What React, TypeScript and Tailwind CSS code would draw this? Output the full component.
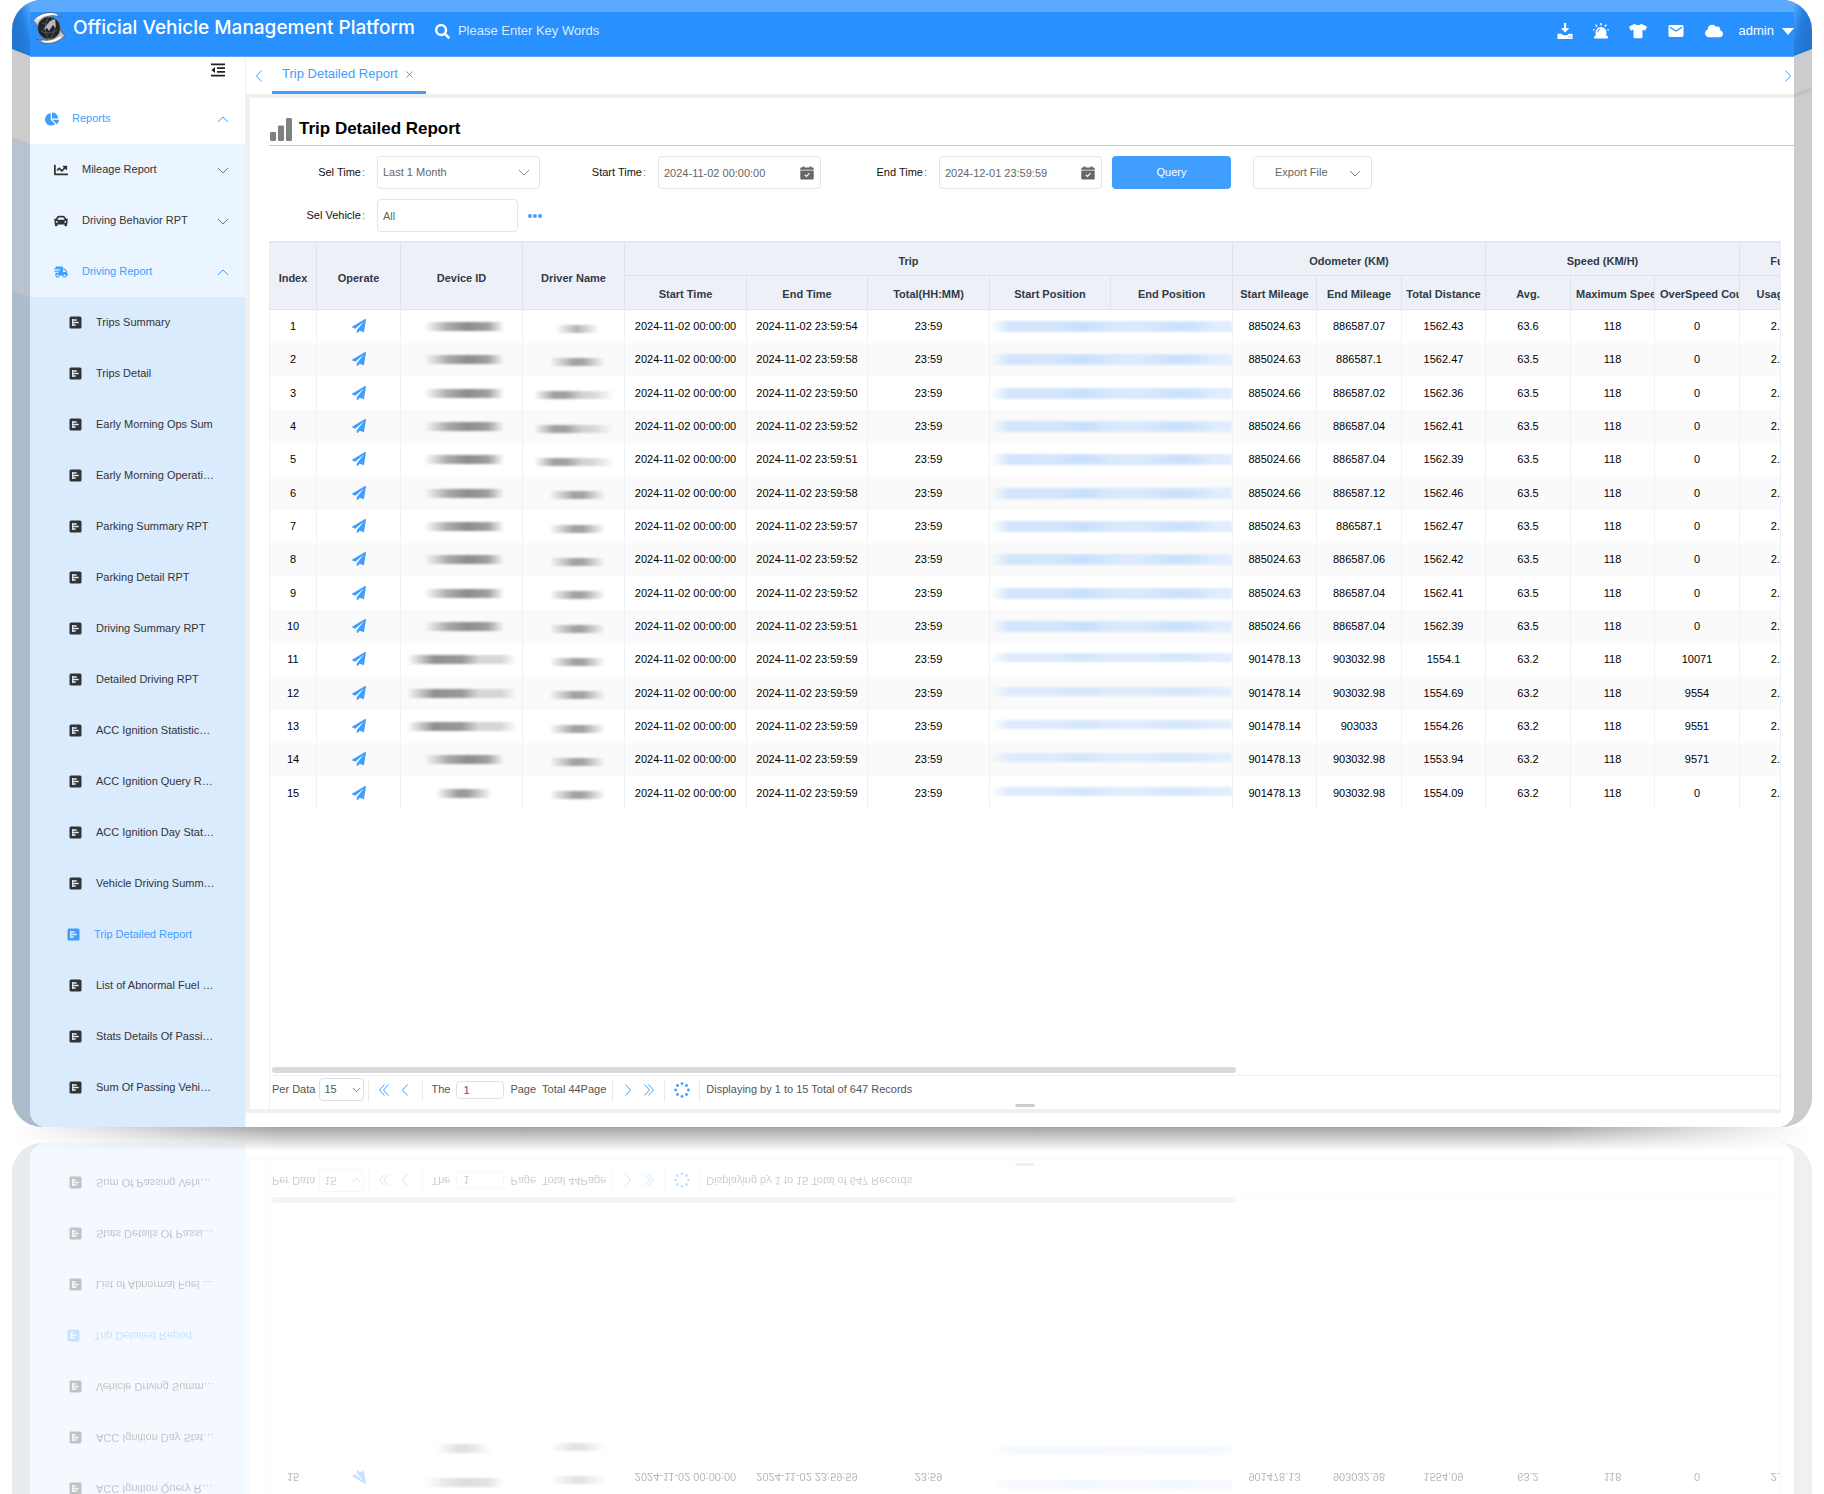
import type { ReactNode } from 'react';
import { clsx } from 'clsx';
import {
  FaCar,
  FaChartLine,
  FaChartPie,
  FaCloud,
  FaPaperPlane,
  FaSearch,
  FaShippingFast,
  FaTshirt,
} from 'react-icons/fa';
import { MdEmail } from 'react-icons/md';

interface TripRow {
  endTime: string;
  startMileage: string;
  endMileage: string;
  distance: string;
  avg: string;
  overSpeed: string;
  device: 'mid' | 'wide' | 'small';
  driver: 'mid' | 'wide' | 'small';
}

const trips: TripRow[] = [
  { endTime: '23:59:54', startMileage: '885024.63', endMileage: '886587.07', distance: '1562.43', avg: '63.6', overSpeed: '0', device: 'mid', driver: 'small' },
  { endTime: '23:59:58', startMileage: '885024.63', endMileage: '886587.1', distance: '1562.47', avg: '63.5', overSpeed: '0', device: 'mid', driver: 'mid' },
  { endTime: '23:59:50', startMileage: '885024.66', endMileage: '886587.02', distance: '1562.36', avg: '63.5', overSpeed: '0', device: 'mid', driver: 'wide' },
  { endTime: '23:59:52', startMileage: '885024.66', endMileage: '886587.04', distance: '1562.41', avg: '63.5', overSpeed: '0', device: 'mid', driver: 'wide' },
  { endTime: '23:59:51', startMileage: '885024.66', endMileage: '886587.04', distance: '1562.39', avg: '63.5', overSpeed: '0', device: 'mid', driver: 'wide' },
  { endTime: '23:59:58', startMileage: '885024.66', endMileage: '886587.12', distance: '1562.46', avg: '63.5', overSpeed: '0', device: 'mid', driver: 'mid' },
  { endTime: '23:59:57', startMileage: '885024.63', endMileage: '886587.1', distance: '1562.47', avg: '63.5', overSpeed: '0', device: 'mid', driver: 'mid' },
  { endTime: '23:59:52', startMileage: '885024.63', endMileage: '886587.06', distance: '1562.42', avg: '63.5', overSpeed: '0', device: 'mid', driver: 'mid' },
  { endTime: '23:59:52', startMileage: '885024.63', endMileage: '886587.04', distance: '1562.41', avg: '63.5', overSpeed: '0', device: 'mid', driver: 'mid' },
  { endTime: '23:59:51', startMileage: '885024.66', endMileage: '886587.04', distance: '1562.39', avg: '63.5', overSpeed: '0', device: 'mid', driver: 'mid' },
  { endTime: '23:59:59', startMileage: '901478.13', endMileage: '903032.98', distance: '1554.1', avg: '63.2', overSpeed: '10071', device: 'wide', driver: 'mid' },
  { endTime: '23:59:59', startMileage: '901478.14', endMileage: '903032.98', distance: '1554.69', avg: '63.2', overSpeed: '9554', device: 'wide', driver: 'mid' },
  { endTime: '23:59:59', startMileage: '901478.14', endMileage: '903033', distance: '1554.26', avg: '63.2', overSpeed: '9551', device: 'wide', driver: 'mid' },
  { endTime: '23:59:59', startMileage: '901478.13', endMileage: '903032.98', distance: '1553.94', avg: '63.2', overSpeed: '9571', device: 'mid', driver: 'mid' },
  { endTime: '23:59:59', startMileage: '901478.13', endMileage: '903032.98', distance: '1554.09', avg: '63.2', overSpeed: '0', device: 'small', driver: 'mid' },
];

const reportLinks = [
  'Trips Summary',
  'Trips Detail',
  'Early Morning Ops Sum',
  'Early Morning Operati…',
  'Parking Summary RPT',
  'Parking Detail RPT',
  'Driving Summary RPT',
  'Detailed Driving RPT',
  'ACC Ignition Statistic…',
  'ACC Ignition Query R…',
  'ACC Ignition Day Stat…',
  'Vehicle Driving Summ…',
  'Trip Detailed Report',
  'List of Abnormal Fuel …',
  'Stats Details Of Passi…',
  'Sum Of Passing Vehi…',
];

const ACTIVE_REPORT = 'Trip Detailed Report';

/* ---------- icons ---------- */

const chevronPoints = {
  up: '1,9 6,4 11,9',
  down: '1,4 6,9 11,4',
  left: '8.5,0.5 3.5,6 8.5,11.5',
  right: '3.5,0.5 8.5,6 3.5,11.5',
};

function Chevron({ dir, className = 'size-3' }: { dir: keyof typeof chevronPoints; className?: string }) {
  return (
    <svg viewBox="0 0 12 12" className={className} fill="none" stroke="currentColor" strokeWidth="1">
      <polyline points={chevronPoints[dir]} />
    </svg>
  );
}

function DoubleChevron({ dir }: { dir: 'left' | 'right' }) {
  return (
    <svg viewBox="0 0 12 12" className="size-3" fill="none" stroke="currentColor" strokeWidth="1">
      {dir === 'left' ? (
        <>
          <polyline points="6.5,0.5 1.5,6 6.5,11.5" />
          <polyline points="10.5,0.5 5.5,6 10.5,11.5" />
        </>
      ) : (
        <>
          <polyline points="1.5,0.5 6.5,6 1.5,11.5" />
          <polyline points="5.5,0.5 10.5,6 5.5,11.5" />
        </>
      )}
    </svg>
  );
}

function DownloadIcon() {
  return (
    <svg viewBox="0 0 16 16" className="size-4" fill="currentColor">
      <path d="M7 0h2.2v5.2h3.2L8.1 9.6 3.8 5.2H7z" />
      <path d="M.5 10.8h4l1.6 1.4h4l1.6-1.4h3.8V16H.5zm10.7 2.6v1h1v-1zm2 0v1h1v-1z" fillRule="evenodd" />
    </svg>
  );
}

function AlarmIcon() {
  return (
    <svg viewBox="0 0 16 16" className="size-4" fill="currentColor">
      <path d="M2.6 13V9.4a5.4 5.4 0 0 1 10.8 0V13h1.4v2.6H1.2V13z" />
      <path d="M7.3 0h1.4v2.4H7.3zM2 2.2l1-1 1.7 1.8-1 1zM13 1.2l1 1L12.3 4l-1-1zM0 6.2h1.7v1.3H0zM14.3 6.2H16v1.3h-1.7z" />
      <path d="M4.6 9.2a3.5 3.5 0 0 1 2.7-3.2" fill="none" stroke="#2890ff" strokeWidth="1" />
    </svg>
  );
}

function FoldIcon() {
  return (
    <svg viewBox="0 0 14 14" className="size-[14px]" fill="currentColor">
      <path d="M0 .5h14v1.8H0zM6 4.3h8V6H6zM6 8h8v1.7H6zM0 11.8h14v1.8H0zM.4 7 4 4v6z" />
    </svg>
  );
}

function ReportIcon() {
  return (
    <svg viewBox="0 0 13 13" className="size-[13px] shrink-0">
      <rect x=".5" y=".5" width="12" height="12" rx="1.5" fill="currentColor" />
      <path d="M3.7 3v7M3.7 4h4M3.7 6.5h6M3.7 9h3" stroke="#dbebfe" strokeWidth="1.3" fill="none" />
    </svg>
  );
}

function CalendarIcon() {
  return (
    <svg viewBox="0 0 14 14" className="pointer-events-none absolute top-[10px] right-[7px] size-[14px] text-[#666]">
      <path d="M1 1.5h1.5v-1h2v1h5v-1h2v1H13a.7.7 0 0 1 .7.7v1.5H.3V2.2a.7.7 0 0 1 .7-.7z" fill="currentColor" />
      <path d="M.3 4.4h13.4v8.200a1 1 0 0 1-1 1H1.300a1 1 0 0 1-1-1z" fill="currentColor" />
      <path d="m4.800 8.800 1.700 1.700 3-3.300" stroke="#fff" strokeWidth="1.2" fill="none" />
    </svg>
  );
}

function BarsIcon() {
  return (
    <svg viewBox="0 0 24 24" className="size-6 text-[#808080]" fill="currentColor">
      <rect x="1" y="15" width="6" height="9" rx="1.2" />
      <rect x="9" y="8.5" width="6" height="15.5" rx="1.2" />
      <rect x="17" y="1" width="6" height="23" rx="1.2" />
    </svg>
  );
}

function LoadingIcon() {
  const dots = [
    [8, 1.6], [12.5, 3.5], [14.4, 8], [12.5, 12.5],
    [8, 14.4], [3.5, 12.5], [1.6, 8], [3.5, 3.5],
  ];
  return (
    <svg viewBox="0 0 16 16" className="size-4" fill="currentColor">
      {dots.map(([x, y]) => (
        <circle key={`${x}-${y}`} cx={x} cy={y} r="1.4" />
      ))}
    </svg>
  );
}

function Logo() {
  return (
    <svg viewBox="0 0 34 34" className="size-[34px] shrink-0">
      <path d="M1 10C6 2 20-2 30 6c-6-2-12-2-17 1C8 9 6 13 6 18 5 14 4 11 1 10z" fill="#d9d9d9" stroke="#555" strokeWidth=".6" />
      <path d="M33 24c-5 8-19 12-29 4 6 2 12 2 17-1 5-2 7-6 7-11 1 4 2 7 5 8z" fill="#c4c4c4" stroke="#444" strokeWidth=".6" />
      <path d="M5 8c6-5 14-6 20-4M10 30c6 2 13 0 19-4" stroke="#fff" strokeWidth="1.6" fill="none" />
      <circle cx="17" cy="17" r="11.5" fill="#222427" stroke="#7d7d7d" strokeWidth="1" />
      <path d="M9 20c3 2 11 3 16-1M10 12c4 2 9 2 14-1M17 6c-5 6-5 16 0 22M19 6c5 6 5 15-1 22" stroke="#5b5f64" strokeWidth=".9" fill="none" />
      <path d="m11 19 7-9 5-2 1 9-3-3-4 6-2-3z" fill="#b4b7bb" />
    </svg>
  );
}

/* ---------- device frame ---------- */

function FrameEdge({ side }: { side: 'left' | 'right' }) {
  return (
    <svg className={clsx('w-[18px] shrink-0 self-stretch', side === 'right' && '-scale-x-100')}>
      <defs>
        <linearGradient id={`frame-corner-${side}`} x1="1" y1="0" x2="0.3" y2="0.6">
          <stop offset="0" stopColor="#5aabff" />
          <stop offset="0.6" stopColor="#2480e0" />
          <stop offset="1" stopColor="#2276d2" />
        </linearGradient>
      </defs>
      {side === 'left' ? (
        <>
          <rect width="18" height="100%" fill="#acbccd" />
          <polygon points="0,0 18,0 18,297 0,291" fill="#b9c3cf" />
          <polygon points="0,0 18,0 18,144 0,137" fill="#cdcccd" />
        </>
      ) : (
        <>
          <rect width="18" height="100%" fill="#cbccce" />
          <polygon points="0,87 18,94 18,98 0,91" fill="#c2c2c4" />
        </>
      )}
      <polygon points="0,0 18,0 18,56 0,49" fill={`url(#frame-corner-${side})`} />
    </svg>
  );
}

/* ---------- header ---------- */

function Header() {
  return (
    <header className="flex h-[57px] items-center border-t-[12px] border-b border-t-[#5aabff] border-b-[#5aabff] bg-[#2890ff] pl-0.5 text-white">
      <div className="flex items-center gap-[7px] pb-3">
        <Logo />
        <h1 className="font-['Inter',sans-serif] text-[19px] font-medium whitespace-nowrap">
          Official Vehicle Management Platform
        </h1>
      </div>
      <label className="ml-5 flex items-center gap-2 pb-1.5">
        <FaSearch className="size-[15px]" />
        <input
          type="text"
          aria-label="Search"
          placeholder="Please Enter Key Words"
          className="w-60 bg-transparent text-[13px] outline-none placeholder:text-[#dcecff]"
        />
      </label>
      <div className="ml-auto flex items-center pb-1.5">
        <div className="flex items-center gap-5">
          <button aria-label="Downloads"><DownloadIcon /></button>
          <button aria-label="Alarms"><AlarmIcon /></button>
          <button aria-label="Theme"><FaTshirt className="size-[18px]" /></button>
          <button aria-label="Messages"><MdEmail className="size-[18px]" /></button>
          <button aria-label="Cloud"><FaCloud className="size-[18px]" /></button>
        </div>
        <button className="ml-4 flex items-center gap-2 text-[13px]">
          admin
          <svg viewBox="0 0 12 7" className="h-[7px] w-3" fill="currentColor">
            <path d="M0 0h12L6 7z" />
          </svg>
        </button>
      </div>
    </header>
  );
}

/* ---------- sidebar ---------- */

function MenuGroup({ icon, label, open, active, nested }: { icon: ReactNode; label: string; open?: boolean; active?: boolean; nested?: boolean }) {
  return (
    <button
      className={clsx(
        'flex h-[51px] w-full items-center pr-4 text-[11px]',
        nested ? 'gap-[14px] bg-[#ebf5ff] pl-6' : 'gap-[13px] pl-[15px]',
        active ? 'text-[#409eff]' : 'text-[#333]',
      )}
    >
      {icon}
      <span className="flex-1 text-left">{label}</span>
      <Chevron dir={open ? 'up' : 'down'} className={clsx('size-3', !active && 'text-[#777]')} />
    </button>
  );
}

function Sidebar() {
  return (
    <aside className="w-[216px] shrink-0 border-r border-[#f0f2f5]">
      <div className="flex h-9 items-center justify-end pr-5 pb-2.5 text-[#222]">
        <button aria-label="Collapse menu"><FoldIcon /></button>
      </div>
      <MenuGroup icon={<FaChartPie className="size-[14px]" />} label="Reports" open active />
      <MenuGroup nested icon={<FaChartLine className="size-[14px]" />} label="Mileage Report" />
      <MenuGroup nested icon={<FaCar className="size-[14px]" />} label="Driving Behavior RPT" />
      <MenuGroup nested icon={<FaShippingFast className="size-[14px]" />} label="Driving Report" open active />
      <nav className="bg-[#dbebfe] pb-[14px]">
        {reportLinks.map((name) => (
          <a
            key={name}
            href="#"
            className={clsx(
              'flex h-[51px] items-center gap-[14px] text-[11px] whitespace-nowrap',
              name === ACTIVE_REPORT ? 'pl-[37px] text-[#409eff]' : 'pl-[39px] text-[#333]',
            )}
          >
            <ReportIcon />
            {name}
          </a>
        ))}
      </nav>
    </aside>
  );
}

/* ---------- filters ---------- */

const boxClass = 'h-[33px] w-full appearance-none rounded-[4px] border border-[#e2e4e8] bg-white px-[5px] text-[11px] text-[#666] outline-none';

function Field({ label, boxWidth = 'w-[163px]', children }: { label: string; boxWidth?: string; children: ReactNode }) {
  return (
    <label className="flex items-center gap-3 text-[11px] text-[#111]">
      <span className="w-24 text-right">
        {label}
        <span className="ml-px text-[#777]">:</span>
      </span>
      <span className={clsx('relative', boxWidth)}>{children}</span>
    </label>
  );
}

function Filters() {
  return (
    <form className="flex flex-col gap-2.5 pt-2.5 pb-[9px]">
      <div className="flex items-center gap-2.5">
        <Field label="Sel Time">
          <select className={boxClass}>
            <option>Last 1 Month</option>
          </select>
          <Chevron dir="down" className="pointer-events-none absolute top-[10px] right-[10px] size-3 text-[#888]" />
        </Field>
        <Field label="Start Time">
          <input type="text" defaultValue="2024-11-02 00:00:00" className={boxClass} />
          <CalendarIcon />
        </Field>
        <Field label="End Time">
          <input type="text" defaultValue="2024-12-01 23:59:59" className={boxClass} />
          <CalendarIcon />
        </Field>
        <button type="button" className="h-[33px] w-[119px] rounded-[4px] bg-[#409eff] text-[11px] text-white">
          Query
        </button>
        <button
          type="button"
          className="ml-3 flex h-[33px] w-[119px] items-center justify-between rounded-[4px] border border-[#e2e4e8] pr-[10px] pl-[21px] text-[11px] text-[#666]"
        >
          Export File
          <Chevron dir="down" className="size-3 text-[#888]" />
        </button>
      </div>
      <div className="flex items-center gap-2.5">
        <Field label="Sel Vehicle" boxWidth="w-[141px]">
          <input type="text" defaultValue="All" className={boxClass} />
        </Field>
        <button type="button" aria-label="Choose vehicles" className="flex gap-px">
          <span className="size-1 rounded-full bg-[#409eff]" />
          <span className="size-1 rounded-full bg-[#409eff]" />
          <span className="size-1 rounded-full bg-[#409eff]" />
        </button>
      </div>
    </form>
  );
}

/* ---------- table ---------- */

const headCell = 'overflow-hidden border-r border-b border-[#dfe4ec] pt-1 font-bold whitespace-nowrap';
const bodyCell = 'border-r border-[#edf2fb] whitespace-nowrap';

const deviceMask = {
  small: 'w-14 bg-[linear-gradient(to_right,transparent,#9a9a9a_40%,#9a9a9a_55%,transparent)]',
  mid: 'w-20 bg-[linear-gradient(to_right,transparent,#aaa_30%,#8c8c8c_55%,#a0a0a0_80%,transparent)]',
  wide: 'w-[110px] bg-[linear-gradient(to_right,transparent,#909090_25%,#999_50%,#d6d6d6_65%,#d6d6d6_85%,transparent)]',
};

const driverMask = {
  small: 'w-11 bg-[linear-gradient(to_right,transparent,#b4b4b4_50%,transparent)]',
  mid: 'w-14 bg-[linear-gradient(to_right,transparent,#a2a2a2_45%,#a2a2a2_60%,transparent)]',
  wide: 'w-20 bg-[linear-gradient(to_right,transparent,#a0a0a0_25%,#a0a0a0_40%,#d2d2d2_60%,#d8d8d8_75%,transparent)]',
};

function TripTable({ mirrored }: { mirrored?: boolean }) {
  const shift = mirrored && 'translate-y-7';
  return (
    <table className="w-[1554px] table-fixed border-separate border-spacing-0 text-center text-[11px]">
      <colgroup>
        <col className="w-[47px]" />
        <col className="w-[84px]" />
        <col className="w-[122px]" />
        <col className="w-[102px]" />
        <col className="w-[122px]" />
        <col className="w-[121px]" />
        <col className="w-[122px]" />
        <col className="w-[121px]" />
        <col className="w-[122px]" />
        <col className="w-[84px]" />
        <col className="w-[85px]" />
        <col className="w-[84px]" />
        <col className="w-[85px]" />
        <col className="w-[84px]" />
        <col className="w-[85px]" />
        <col className="w-[84px]" />
      </colgroup>
      <thead className="bg-[#edf1f7] text-[#303a48]">
        <tr className="h-[33px]">
          <th rowSpan={2} className={headCell}>Index</th>
          <th rowSpan={2} className={headCell}>Operate</th>
          <th rowSpan={2} className={headCell}>Device ID</th>
          <th rowSpan={2} className={headCell}>Driver Name</th>
          <th colSpan={5} className={clsx(headCell, 'pr-10')}>Trip</th>
          <th colSpan={3} className={clsx(headCell, 'pr-5')}>Odometer (KM)</th>
          <th colSpan={3} className={clsx(headCell, 'pr-5')}>Speed (KM/H)</th>
          <th className={headCell}>Fuel</th>
        </tr>
        <tr className="h-[34px]">
          <th className={headCell}>Start Time</th>
          <th className={headCell}>End Time</th>
          <th className={headCell}>Total(HH:MM)</th>
          <th className={headCell}>Start Position</th>
          <th className={headCell}>End Position</th>
          <th className={headCell}>Start Mileage</th>
          <th className={headCell}>End Mileage</th>
          <th className={headCell}>Total Distance</th>
          <th className={headCell}>Avg.</th>
          <th className={clsx(headCell, 'pl-[5px]')}>Maximum Speed</th>
          <th className={clsx(headCell, 'pl-[5px]')}>OverSpeed Count</th>
          <th className={headCell}>Usage (L)</th>
        </tr>
      </thead>
      <tbody className="text-black">
        {trips.map((trip, index) => (
          <tr key={index} className="h-[33px] even:bg-[#fafafa] [&:nth-child(3n)]:h-[34px]">
            <td className={bodyCell}>{index + 1}</td>
            <td className={bodyCell}>
              <button aria-label="Show track" className="pb-0.5 align-middle text-[#409eff]">
                <FaPaperPlane className="size-[14px]" />
              </button>
            </td>
            <td className={clsx(bodyCell, trip.device !== 'wide' && 'pl-1')}>
              <div className={clsx('mx-auto h-[9px] blur-[1px]', deviceMask[trip.device], shift)} />
            </td>
            <td className={clsx(bodyCell, trip.driver !== 'wide' && 'pl-1.5')}>
              <div className={clsx('mx-auto mt-1 h-2 blur-[1px]', driverMask[trip.driver], shift)} />
            </td>
            <td className={bodyCell}>2024-11-02 00:00:00</td>
            <td className={bodyCell}>2024-11-02 {trip.endTime}</td>
            <td className={bodyCell}>23:59</td>
            <td colSpan={2} className={bodyCell}>
              <div
                className={clsx(
                  'bg-linear-to-r from-transparent to-[#e2eefd] blur-[1px]',
                  shift,
                  index < 10 ? 'h-[11px] via-[#d2e5fc] via-8%' : 'mb-1 h-[9px] via-[#deebfc] via-8%',
                )}
              >
                <div
                  className={clsx(
                    'h-full bg-[radial-gradient(ellipse_30px_8px_at_38%_50%,#c4defc,transparent),radial-gradient(ellipse_40px_8px_at_78%_50%,#c4defc,transparent)]',
                    index >= 10 && 'opacity-50',
                  )}
                />
              </div>
            </td>
            <td className={bodyCell}>{trip.startMileage}</td>
            <td className={bodyCell}>{trip.endMileage}</td>
            <td className={bodyCell}>{trip.distance}</td>
            <td className={bodyCell}>{trip.avg}</td>
            <td className={bodyCell}>118</td>
            <td className={bodyCell}>{trip.overSpeed}</td>
            <td className={bodyCell}>2.55</td>
          </tr>
        ))}
      </tbody>
    </table>
  );
}

/* ---------- pagination ---------- */

function Divider() {
  return <span className="h-[22px] w-px bg-[#e8eaee]" />;
}

function Pagination() {
  return (
    <div className="relative flex h-[34px] items-center border-t border-[#eceff5] pb-1.5 pl-0.5 text-[11px] text-[#555]">
      <label className="flex items-center gap-1">
        Per Data
        <span className="relative">
          <select className="h-[23px] w-[45px] appearance-none rounded-[4px] border border-[#dcdfe6] bg-white px-1 outline-none">
            <option>15</option>
          </select>
          <Chevron dir="down" className="pointer-events-none absolute top-[7px] right-[3px] size-[9px] text-[#555]" />
        </span>
      </label>
      <div className="mr-2 ml-1 flex items-center gap-[9px] text-[#409eff]">
        <Divider />
        <button aria-label="First page"><DoubleChevron dir="left" /></button>
        <button aria-label="Previous page" className="mr-0.5"><Chevron dir="left" /></button>
        <Divider />
      </div>
      <label className="flex items-center gap-1.5">
        The
        <input type="text" defaultValue="1" className="h-[18px] w-12 rounded-[4px] border border-[#dfe1e6] px-1.5 outline-none" />
        Page
      </label>
      <span className="mx-1.5">Total 44Page</span>
      <div className="flex items-center gap-[9px] text-[#409eff]">
        <Divider />
        <button aria-label="Next page"><Chevron dir="right" /></button>
        <button aria-label="Last page"><DoubleChevron dir="right" /></button>
        <Divider />
        <button aria-label="Refresh"><LoadingIcon /></button>
        <Divider />
      </div>
      <span className="ml-1.5">Displaying by 1 to 15 Total of 647 Records</span>
      <span className="absolute bottom-0.5 left-1/2 h-[3px] w-[19px] -translate-x-1/2 bg-[#ccc]" />
    </div>
  );
}

/* ---------- page ---------- */

function ReportPage({ mirrored }: { mirrored?: boolean }) {
  return (
    <main className="flex min-w-0 flex-1 flex-col">
      <div className="flex h-[37px] items-center pl-[7px] text-[#409eff]">
        <button aria-label="Scroll tabs left"><Chevron dir="left" className="size-3" /></button>
        <div className="ml-[7px] flex h-full items-center gap-2 border-b-[3px] border-[#409eff] pr-[13px] pl-[10px] text-[13px]">
          Trip Detailed Report
          <button aria-label="Close tab">
            <svg viewBox="0 0 8 8" className="size-[7px]" stroke="currentColor" strokeWidth="1.1">
              <path d="m.5.5 7 7m0-7-7 7" />
            </svg>
          </button>
        </div>
        <button aria-label="Scroll tabs right" className="ml-auto"><Chevron dir="right" className="size-3" /></button>
      </div>
      <section className="flex flex-1 flex-col border-t-4 border-l-4 border-[#f0f0f0] pl-[19px]">
        <div className="flex h-12 items-end gap-1.5 border-b border-[#c8c8c8] pb-1">
          <BarsIcon />
          <h2 className="pb-0.5 text-[17px] leading-5 font-bold text-black">Trip Detailed Report</h2>
        </div>
        <Filters />
        <div className="mr-[13px] flex flex-1 flex-col border-x border-[#eceff5]">
          <div className="flex-1 overflow-hidden border-t-2 border-[#e4e7ed]">
            <TripTable mirrored={mirrored} />
          </div>
          <div className="mb-0.5 h-1.5 pr-[275px] pl-0.5">
            <div className="h-full w-[964px] max-w-full rounded-full bg-[#d9dadc]" />
          </div>
          <Pagination />
        </div>
      </section>
      <div className="mr-[13px] mb-[14px] h-1 bg-[#f0f0f0]" />
    </main>
  );
}

function Screen({ mirrored }: { mirrored?: boolean }) {
  return (
    <div className="flex overflow-hidden rounded-[30px] bg-linear-to-r from-[#acbccd] from-50% to-[#cbccce] to-50%">
      <FrameEdge side="left" />
      <div className="min-w-0 flex-1 overflow-hidden rounded-b-2xl bg-white">
        <Header />
        <div className="flex">
          <Sidebar />
          <ReportPage mirrored={mirrored} />
        </div>
      </div>
      <FrameEdge side="right" />
    </div>
  );
}

export default function App() {
  return (
    <div className="h-screen overflow-hidden bg-white px-3 font-['Liberation_Sans',Arial,sans-serif] leading-normal">
      <Screen />
      {/* floor reflection */}
      <div className="relative">
        <div className="pt-4">
          <div className="-scale-y-100 opacity-30" aria-hidden inert>
            <Screen mirrored />
          </div>
        </div>
        <div className="absolute inset-x-0 top-0 h-6 bg-linear-to-b from-[#a2a3a3] to-transparent [mask-image:linear-gradient(to_right,transparent,black_15%,black_85%,transparent)]" />
      </div>
    </div>
  );
}
